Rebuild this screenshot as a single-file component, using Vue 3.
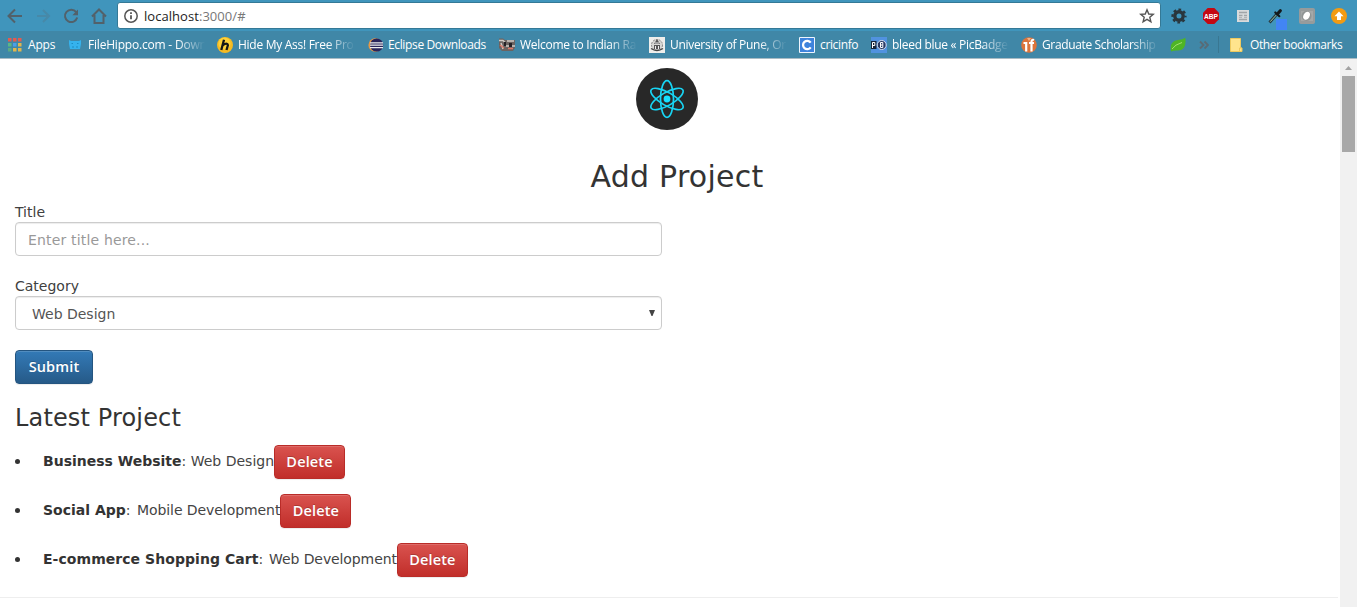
<script setup>
import { ref } from 'vue'

const title = ref('')
const bookmarks = [
  { icon: 'apps', label: 'Apps' },
  { icon: 'hippo', label: 'FileHippo.com - Down', fade: true },
  { icon: 'hma', label: 'Hide My Ass! Free Pro', fade: true },
  { icon: 'eclipse', label: 'Eclipse Downloads' },
  { icon: 'train', label: 'Welcome to Indian Ra', fade: true },
  { icon: 'pune', label: 'University of Pune, Or', fade: true },
  { icon: 'cric', label: 'cricinfo' },
  { icon: 'pic', label: 'bleed blue « PicBadge', fade: true },
  { icon: 'grad', label: 'Graduate Scholarship', fade: true }
]
const projects = ref([
  { id: 1, title: 'Business Website', category: 'Web Design', cls: 'p1' },
  { id: 2, title: 'Social App', category: 'Mobile Development', cls: 'p2' },
  { id: 3, title: 'E-commerce Shopping Cart', category: 'Web Development', cls: 'p3' }
])
const remove = (id) => {
  projects.value = projects.value.filter((p) => p.id !== id)
}
</script>

<template>
  <div class="window">
    <header class="chrome">
      <div class="toolbar">
        <svg class="nav" width="117" height="31" viewBox="0 0 117 31" fill="none" stroke="#52616a" stroke-width="2">
          <path d="M22 16H9M15 9.500L8.500 16l6.500 6.500" />
          <path d="M37 16h12M43 10l6 6-6 6" stroke="#4789a8" />
          <path d="M76.200 12.200A6.200 6.200 0 1 0 77.200 17.500" />
          <path d="M78 9.500v5.700h-5.700z" fill="#52616a" stroke="none" />
          <path d="M92 16.500L99 9.500l7 7M94.500 15v8h9v-8" />
        </svg>
        <div class="address">
          <svg width="16" height="16" viewBox="0 0 16 16" fill="none" stroke="#555" stroke-width="1.500">
            <circle cx="8" cy="8" r="6.200" /><path d="M8 7.200v4M8 4.300v1.600" stroke-width="1.800" />
          </svg>
          <span class="url">localhost<i>:3000/#</i></span>
          <svg class="star" width="16" height="16" viewBox="0 0 16 16" fill="none" stroke="#555" stroke-width="1.400">
            <path d="M8 1.800l1.750 4.200 4.550.35-3.500 2.950 1.100 4.450L8 11.350l-3.900 2.400 1.100-4.450-3.500-2.950L6.250 6z" />
          </svg>
        </div>
        <div class="extensions">
          <svg viewBox="0 0 16 16">
            <circle cx="8" cy="8" r="4.200" fill="none" stroke="#29363d" stroke-width="3.400" />
            <circle cx="8" cy="8" r="6.500" fill="none" stroke="#29363d" stroke-width="2.200" stroke-dasharray="2.700 2.405" stroke-dashoffset="1.350" />
          </svg>
          <svg viewBox="0 0 16 16" overflow="visible">
            <path d="M4.700 0h6.600L16 4.700v6.600L11.300 16H4.700L0 11.300V4.700z" fill="#c40812" />
            <text x="8" y="10.900" text-anchor="middle" textLength="14" lengthAdjust="spacingAndGlyphs" class="abp">ABP</text>
          </svg>
          <svg viewBox="0 0 16 16">
            <path d="M2 2h12v12H2z" fill="#d9dbdc" /><path d="M4 4.500h8M4 7.500h3.500M9 7.500h3M4 11.500h8" stroke="#a1a5a8" stroke-width="1.500" />
            <path d="M4 9.500h3M9 9.500h3" stroke="#b3b6b8" />
          </svg>
          <svg viewBox="0 0 16 16" overflow="visible">
            <path d="M9 11h11v11H9z" fill="#4285f4" /><path d="M2.500 14.500L9.500 6.500" stroke="#26353b" stroke-width="2.800" />
            <path d="M3.200 13.700L9.500 6.800" stroke="#96c9ac" />
            <path d="M8.300 4.500l4 3.700" stroke="#14191c" stroke-width="2.200" stroke-linecap="round" /><path d="M10.800 5.500l2.500-2.800" stroke="#14191c" stroke-width="3.200" stroke-linecap="round" />
          </svg>
          <svg viewBox="0 0 16 16">
            <rect width="16" height="16" rx="2" fill="#969b9c" /><path d="M2 3h12v10H2z" fill="#a5a8a8" />
            <circle cx="7.500" cy="8" r="5" fill="#8f9494" /><ellipse cx="7.500" cy="8" rx="3" ry="4.200" transform="rotate(28 8 8)" fill="#fff" />
          </svg>
          <svg viewBox="0 0 16 16">
            <circle cx="8" cy="8" r="8" fill="#f39b12" /><path d="M8 3.500l4.500 4.700H10V12H6V8.200H3.500z" fill="#fff" />
          </svg>
        </div>
      </div>

      <nav class="bookmarks">
        <a v-for="b in bookmarks" :key="b.label" :class="['bookmark', b.icon]">
          <svg width="16" height="16" viewBox="0 0 16 16">
            <g v-if="b.icon === 'apps'">
              <path d="M1 1h3.500v3.500H1zM6 1h3.500v3.500H6zM11 1h3.500v3.500H11z" fill="#e35b50" />
              <path d="M1 6h3.500v3.500H1z" fill="#5bb784" /><path d="M6 6h3.500v3.500H6z" fill="#4c9fe8" /><path d="M11 6h3.500v3.500H11zM11 11h3.500v3.500H11zM6 11h3.500v3.500H6z" fill="#dfb64f" />
              <path d="M1 11h3.500v3.500H1z" fill="#5baa83" />
            </g>
            <g v-else-if="b.icon === 'hippo'">
              <path d="M2 3l2 1h8l2-1v4l-1 5H3L2 7z" fill="#35b2ed" /><path d="M4.500 6.500h1.500M10 6.500h1.500M5 10h2M9 10h2" stroke="#1d8dc4" />
            </g>
            <g v-else-if="b.icon === 'hma'">
              <circle cx="8" cy="8" r="8" fill="#f5ba22" /><circle cx="7.500" cy="6.500" r="6" fill="#ffd23a" />
              <path d="M7 2.800L4.300 13M5.700 8.200q4.800-3 5.200 0L9.500 13" fill="none" stroke="#161616" stroke-width="2.300" />
            </g>
            <g v-else-if="b.icon === 'eclipse'">
              <circle cx="7.200" cy="8" r="6.800" fill="#e99945" /><circle cx="8.600" cy="8" r="6.600" fill="#29235a" />
              <path d="M2 5.800h13M2 8.200h13M2 10.600h13" stroke="#eee" stroke-width="1.200" />
            </g>
            <g v-else-if="b.icon === 'train'">
              <path d="M0 1.500h4l2 1.500h10v8l-2 3H3l-3-3z" fill="#6b6361" /><path d="M0 3.500h4l2 2M2 6l2 6M8 4h7M7 9h3M13 9h3" fill="none" stroke="#d0cbc6" stroke-width="1.400" />
              <path d="M1 8l4 3M9 11.500h5" stroke="#dd7768" stroke-width="1.400" /><path d="M10 6h3v4h-3M5 5h2v4H5" fill="#242126" />
            </g>
            <g v-else-if="b.icon === 'pune'">
              <path d="M0 0h16v16H0z" fill="#eeeeeb" /><circle cx="8" cy="8" r="5.500" fill="#d8d8d5" stroke="#888" stroke-dasharray="2 1" />
              <path d="M5 7l3-5 3 5zM5 8h6v4H5z" fill="#555" /><path d="M2 11.500q6 4 12 0" fill="none" stroke="#444" stroke-width="1.500" /><path d="M6.500 9v3M9.500 9v3M6 6h4" stroke="#eee" />
            </g>
            <g v-else-if="b.icon === 'cric'">
              <rect width="16" height="16" rx="1" fill="#eef5fe" /><path d="M1 1h14v14H1z" fill="#3e83dc" />
              <path d="M11.700 5.600A4.200 4.200 0 1 0 11.700 10.400" fill="none" stroke="#fff" stroke-width="2.300" />
            </g>
            <g v-else-if="b.icon === 'pic'">
              <path d="M0 0h16v16H0z" fill="#5192df" /><path d="M0 4h5.500v8H0z" fill="#17243a" /><path d="M1.500 11V5.500h2.300v3H1.500" fill="none" stroke="#fff" />
              <circle cx="10.700" cy="8" r="4.500" fill="#283964" stroke="#d6dfef" /><path d="M9.500 5.500h2.300v5H9.500zM9.500 8h2" fill="none" stroke="#fff" />
            </g>
            <g v-else>
              <circle cx="8" cy="8" r="7.800" fill="#dc743b" /><path d="M2.500 6h2.700v8.500M8 6h5M10.500 14.500V5q0-3 2.500-2" fill="none" stroke="#fff" stroke-width="2.200" />
              <path d="M6 1l2 3 2-3" fill="#f4b184" />
            </g>
          </svg>
          <span :class="{ fade: b.fade }">{{ b.label }}</span>
        </a>
        <svg class="leaf" width="16" height="16" viewBox="0 0 16 16">
          <path d="M1 14.500Q-1 4 8 3 13 2.500 15.300.800 17 13 8 13.500 4 13.200 1 14.500z" fill="#4fb526" /><path d="M2 12Q5 7.500 12 5.500" fill="none" stroke="#a1df70" />
        </svg>
        <svg class="more" width="10" height="10" viewBox="0 0 10 10" fill="none" stroke="#586b76" stroke-width="1.900"><path d="M1 1.500L4.500 5 1 8.500M5.500 1.500L9 5 5.500 8.500" /></svg>
        <i class="divider"></i>
        <a class="bookmark other">
          <svg width="16" height="16" viewBox="0 0 16 16"><path d="M1.500 1.500h10v9.500h1.500v3.500H1.500z" fill="#ffe48d" stroke="#edc95f" /><path d="M10.500 14v-3H13" fill="#ffe48d" stroke="#edc95f" /></svg>
          <span>Other bookmarks</span>
        </a>
      </nav>
    </header>

    <div class="viewport">
      <main class="page">
        <svg class="logo" width="62" height="62" viewBox="-31 -31 62 62">
          <circle r="31" fill="#282828" />
          <g fill="none" stroke="#18d5f4" stroke-width="1.700">
            <ellipse rx="6.500" ry="18.300" /><ellipse rx="6.500" ry="18.300" transform="rotate(60)" /><ellipse rx="6.500" ry="18.300" transform="rotate(120)" />
          </g>
          <circle r="3.400" fill="#18e0ff" />
        </svg>
        <h2>Add Project</h2>
        <form @submit.prevent>
          <label for="title">Title</label>
          <input id="title" v-model="title" class="control" type="text" placeholder="Enter title here...">
          <label for="category">Category</label>
          <div class="control select" id="category"><span>Web Design</span><svg width="6" height="6" viewBox="0 0 6 6"><path d="M0 0h6L3.500 6h-1z" fill="#444" /></svg></div>
          <button class="btn primary" type="submit">Submit</button>
        </form>
        <h3>Latest Project</h3>
        <ul>
          <li v-for="p in projects" :key="p.id" :class="p.cls">
            <i class="bullet"></i>
            <strong>{{ p.title }}</strong><span class="colon">:&nbsp;</span><span class="category">{{ p.category }}</span>
            <button class="btn danger" type="button" @click="remove(p.id)">Delete</button>
          </li>
        </ul>
        <hr>
      </main>
      <aside class="scrollbar">
        <svg width="17" height="17" viewBox="0 0 17 17"><path d="M5 11l3.500-4 3.500 4z" fill="#a3a3a3" /></svg>
        <div class="thumb"></div>
      </aside>
    </div>
  </div>
</template>

<style>
html, body { margin: 0; overflow: hidden; background: #fff; }
</style>

<style scoped>
* { box-sizing: border-box; }
.window { width: 1357px; height: 607px; overflow: hidden; display: flex; flex-direction: column; font-family: "DejaVu Sans", sans-serif; color: #333; }
.chrome { height: 59px; flex: none; background: #4087a7; border-bottom: 1px solid #a9bbc4; font-family: "Open Sans", sans-serif; }
.toolbar { height: 31px; display: flex; background: #4095bc; }
.nav { flex: none; }
.address { flex: none; width: 1044px; height: 27px; margin-top: 2px; border: 1px solid #347996; border-radius: 3px; background: #fff; display: flex; align-items: center; padding: 0 5px; }
.url { margin-left: 5px; font-size: 13px; line-height: 18px; letter-spacing: .05px; color: #222; }
.url i { font-style: normal; color: #777; }
.star { margin-left: auto; }
.extensions { display: grid; grid-template-columns: repeat(6, 32px); margin-left: 10px; padding-top: 8px; }
.extensions svg { width: 16px; height: 16px; }
.abp { font: bold 8px "Liberation Sans", sans-serif; fill: #fff; }
.bookmarks { height: 27px; padding-left: 7px; display: grid; grid-template-columns: 60px 150px 151px 131px 150px 150px 72px 150px 149px 29px 19px 11px 127px; align-items: center; }
.bookmark { display: flex; align-items: center; gap: 5px; color: #fff; font-size: 12px; line-height: 18px; letter-spacing: -.36px; white-space: nowrap; }
.bookmark svg { flex: none; }
.apps { letter-spacing: -.2px; }
.eclipse { gap: 4px; }
.fade { width: 117px; mask-image: linear-gradient(to right, #000 76%, transparent 100%); }
.hippo .fade { letter-spacing: -.2px; }
.hma .fade, .train .fade { letter-spacing: -.28px; }
.pune .fade, .pic .fade { letter-spacing: -.3px; }
.other { letter-spacing: -.42px; }
.divider { width: 1px; height: 17px; background: #397792; }
.viewport { flex: 1; display: flex; min-height: 0; }
.page { width: 1340px; display: flex; flex-direction: column; align-items: flex-start; }
.logo { margin: 9px 0 0 636px; }
h2, h3 { font-weight: 400; margin: 0; }
h2 { align-self: center; font-size: 30px; line-height: 33px; margin-top: 30px; padding-left: 14px; letter-spacing: .25px; }
form { width: 647px; margin-left: 15px; margin-top: 9px; display: flex; flex-direction: column; align-items: flex-start; }
label { font-size: 14px; line-height: 20px; color: #404040; }
.control { width: 647px; height: 34px; margin-bottom: 20px; padding: 7px 12px 5px; font: 14px/20px "DejaVu Sans", sans-serif; color: #555; background: #fff; border: 1px solid #ccc; border-radius: 4px; box-shadow: inset 0 1px 1px rgba(0, 0, 0, .075); outline: none; }
.control::placeholder { color: #999; opacity: 1; letter-spacing: .17px; }
.select { display: flex; justify-content: space-between; padding: 7px 6px 5px 16px; }
.select svg { margin-top: 6px; }
.btn { flex: none; height: 34px; padding: 0; border-radius: 4px; color: #fff; font: 600 14.5px/20px "Open Sans", sans-serif; letter-spacing: .15px; text-shadow: 0 -1px 0 rgba(0, 0, 0, .2); box-shadow: inset 0 1px 0 rgba(255, 255, 255, .15), 0 1px 1px rgba(0, 0, 0, .075); }
.primary { width: 78px; border: 1px solid #245580; background: linear-gradient(#337ab7, #265a88); }
.danger { width: 71px; border: 1px solid #b92c28; background: linear-gradient(#d9534f, #c12e2a); }
h3 { margin: 21px 0 0 15px; font-size: 24px; line-height: 26px; letter-spacing: .15px; }
ul { margin: 14px 0 0 15px; padding: 0; list-style: none; display: grid; gap: 15px; }
li { display: flex; height: 34px; font-size: 14px; line-height: 32px; white-space: nowrap; }
.bullet { width: 5px; height: 5px; margin: 14px 23px 0 0; background: #333; border-radius: 50%; }
strong { font-weight: 700; }
.category, .colon { color: #444; }
.p2 .colon { margin-right: 2px; }
.p2 .category { letter-spacing: -.07px; }
.p3 strong { letter-spacing: .05px; }
.p3 .colon { margin-right: 1.500px; }
.p3 .category { letter-spacing: -.1px; }
hr { width: 1338px; height: 1px; margin: 20px 0 0; border: 0; background: #eee; }
.scrollbar { width: 17px; background: #f1f1f1; display: flex; flex-direction: column; align-items: center; }
.thumb { width: 13px; height: 76px; background: #a8a8a8; }
</style>
